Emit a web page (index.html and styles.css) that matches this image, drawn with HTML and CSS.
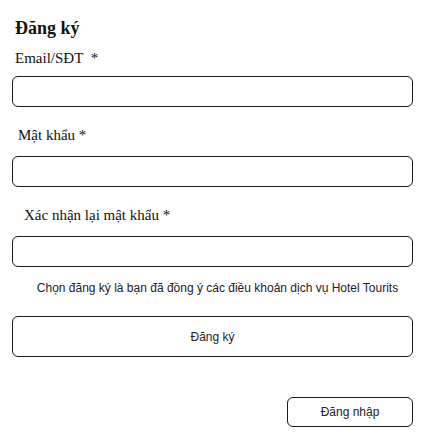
FILE: index.html
```html
<!DOCTYPE html>
<html lang="vi">
<head>
<meta charset="utf-8">
<title>Đăng ký</title>
<link rel="stylesheet" href="styles.css">
</head>
<body>
<form class="form">
  <h1 class="title">Đăng ký</h1>
  <label class="label label-email">Email/SĐT&nbsp; *</label>
  <input class="field" type="text">
  <label class="label label-pass">Mật khẩu *</label>
  <input class="field" type="password">
  <label class="label label-confirm">Xác nhận lại mật khẩu *</label>
  <input class="field" type="password">
  <p class="terms">Chọn đăng ký là bạn đã đồng ý các điều khoản dịch vụ Hotel Tourits</p>
  <button class="btn btn-register" type="button">Đăng ký</button>
  <div class="login-row">
    <button class="btn btn-login" type="button">Đăng nhập</button>
  </div>
</form>
</body>
</html>
```
FILE: styles.css
```css
html, body {
  margin: 0;
  padding: 0;
  background: #fff;
}
.form {
  width: 401px;
  margin-left: 12px;
  display: flex;
  flex-direction: column;
  font-family: "Liberation Serif", serif;
  color: #111;
}
.title {
  margin: 16px 0 0 0;
  padding-left: 3px;
  font-size: 18px;
  line-height: 24px;
  font-weight: bold;
}
.label {
  display: block;
  font-size: 15px;
  line-height: 20px;
}
.label-email {
  margin-top: 8px;
  margin-bottom: 8px;
  padding-left: 3px;
}
.label-pass {
  margin-top: 18px;
  margin-bottom: 11px;
  padding-left: 6px;
}
.label-confirm {
  margin-top: 18px;
  margin-bottom: 11px;
  padding-left: 12px;
}
.field {
  box-sizing: border-box;
  width: 401px;
  height: 31px;
  margin: 0;
  border: 1px solid #1a1a1a;
  border-radius: 6px;
  background: #fff;
  outline: none;
}
.terms {
  margin: 13px 0 0 0;
  padding-left: 10px;
  font-family: "Liberation Sans", Arial, sans-serif;
  font-size: 12px;
  line-height: 16px;
  text-align: center;
  color: #222;
}
.btn {
  box-sizing: border-box;
  margin: 0;
  padding: 0;
  background: #fff;
  border: 1px solid #1a1a1a;
  border-radius: 6px;
  font-family: "Liberation Sans", Arial, sans-serif;
  font-size: 12px;
  color: #222;
}
.btn-register {
  margin-top: 20px;
  width: 401px;
  height: 41px;
}
.login-row {
  display: flex;
  justify-content: flex-end;
  margin-top: 40px;
}
.btn-login {
  width: 126px;
  height: 30px;
}
```
